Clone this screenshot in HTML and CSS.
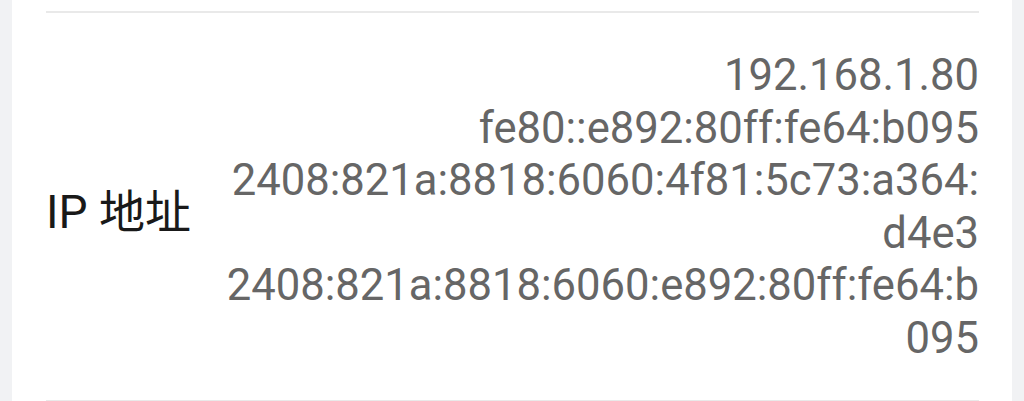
FILE: index.html
```html
<!DOCTYPE html>
<html lang="zh">
<head>
<meta charset="utf-8">
<title>IP 地址</title>
<link rel="stylesheet" href="styles.css">
</head>
<body>
<div class="page">
  <div class="card">
    <div class="divider"></div>
    <div class="row">
      <div class="label">IP 地址</div>
      <div class="value">
        <div class="addr">192.168.1.80</div>
        <div class="addr">fe80::e892:80ff:fe64:b095</div>
        <div class="addr">2408:821a:8818:6060:4f81:5c73:a364:d4e3</div>
        <div class="addr">2408:821a:8818:6060:e892:80ff:fe64:b095</div>
      </div>
    </div>
    <div class="divider"></div>
  </div>
</div>
</body>
</html>
```

FILE: styles.css
```css
html, body {
  margin: 0;
  padding: 0;
  background: #f1f2f4;
}
.page {
  padding: 0 12px;
  height: 401px;
  overflow: hidden;
}
.card {
  background: #ffffff;
  padding: 11px 33px 0 34px;
  height: 390px;
}
.divider {
  height: 2px;
  background: #e9e9e9;
}
.row {
  display: flex;
  align-items: center;
  justify-content: space-between;
  padding: 37px 0 34px 0;
}
.label {
  font-family: Roboto, "Noto Sans CJK SC", sans-serif;
  font-size: 46px;
  color: #191919;
  white-space: nowrap;
}
.value {
  font-family: Roboto, "Noto Sans CJK SC", sans-serif;
  font-size: 43.6px;
  line-height: 52.6px;
  color: #666666;
  text-align: right;
  width: 17.5em;
  word-break: break-all;
}
```
